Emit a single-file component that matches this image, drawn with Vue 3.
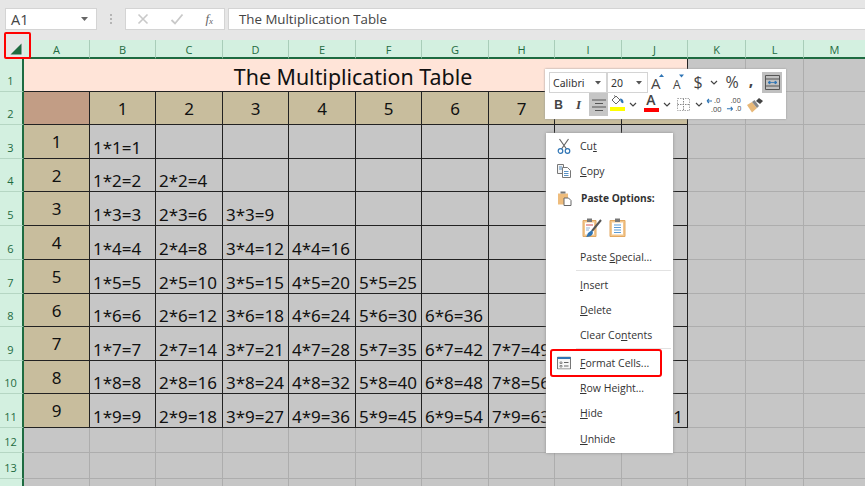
<script setup>
const colLetters = ['A','B','C','D','E','F','G','H','I','J','K','L','M']
const colWidths = [66,66,67,66,67,66,67,66,67,66,58,58,62]
const rowHeights = [33,33,34,33,34,34,34,33,34,33,34,25,26,26]
const gridStyle = {
  gridTemplateColumns: '24px ' + colWidths.map(w => w + 'px').join(' '),
  gridTemplateRows: '19px ' + rowHeights.map(h => h + 'px').join(' ')
}
const nums = [1,2,3,4,5,6,7,8,9]
const covered = j => j === 8
const headerNums = nums.map(n => (n < 8 ? n : ''))
const tableRows = nums.map(n => ({ n, cells: nums.map(j => (j <= n && !covered(j)) ? `${j}*${n}=${j*n}` : '') }))
</script>

<template>
  <div class="app">
    <div class="formula-bar">
      <div class="namebox">
        <span>A1</span>
        <svg width="8" height="5" viewBox="0 0 8 5"><path d="M0 0h7L3.5 4z" fill="#666"/></svg>
      </div>
      <div class="dots"><i></i><i></i><i></i></div>
      <div class="fx-buttons">
        <svg width="12" height="12" viewBox="0 0 12 12"><path d="M1.5 1.5l9 9M10.5 1.5l-9 9" stroke="#c9c9c9" stroke-width="1.6" fill="none"/></svg>
        <svg width="14" height="12" viewBox="0 0 14 12"><path d="M1.5 7l3.5 3.5L12.5 1.5" stroke="#c9c9c9" stroke-width="1.8" fill="none"/></svg>
        <span class="fx">f<sub>x</sub></span>
      </div>
      <div class="formula-input">The Multiplication Table</div>
    </div>

    <div class="sheet" :style="gridStyle">
      <div class="corner">
        <svg class="corner-tri" width="12" height="12" viewBox="0 0 12 12"><path d="M11.5 .5V11.5H.5z" fill="#1e6b41"/></svg>
      </div>
      <div v-for="c in colLetters" :key="c" class="col-head">{{ c }}</div>

      <div class="row-head">1</div>
      <div class="title-cell">The Multiplication Table</div>
      <div class="blank"></div><div class="blank"></div><div class="blank"></div>

      <div class="row-head">2</div>
      <div class="cell a2"></div>
      <div v-for="(n, k) in headerNums" :key="'h'+k" class="cell tan">{{ n }}</div>
      <div class="blank"></div><div class="blank"></div><div class="blank"></div>

      <template v-for="(r, i) in tableRows" :key="r.n">
        <div class="row-head">{{ i + 3 }}</div>
        <div class="cell tan">{{ r.n }}</div>
        <div v-for="(t, k) in r.cells" :key="k" class="cell product">{{ t }}</div>
        <div class="blank"></div><div class="blank"></div><div class="blank"></div>
      </template>

      <template v-for="rn in [12,13,14]" :key="rn">
        <div class="row-head">{{ rn < 14 ? rn : '' }}</div>
        <div v-for="c in colLetters" :key="c" class="blank"></div>
      </template>
    </div>

    <div class="corner-mark"></div>

    <div class="mini-bar">
      <div class="mini-row">
        <div class="combo font"><span>Calibri</span><svg width="6" height="4" viewBox="0 0 6 4"><path d="M0 0h6L3 3.5z" fill="#555"/></svg></div>
        <div class="combo size"><span>20</span><svg width="6" height="4" viewBox="0 0 6 4"><path d="M0 0h6L3 3.5z" fill="#555"/></svg></div>
        <div class="tool w20 first">
          <svg width="20" height="21" viewBox="0 0 20 21"><text x="2" y="16.500" font-size="15" font-family="Open Sans" fill="#444">A</text><path d="M10 5l2.500-3L15 5z" fill="#2f75b5"/></svg>
        </div>
        <div class="tool w20">
          <svg width="20" height="21" viewBox="0 0 20 21"><text x="4" y="16.500" font-size="12" font-family="Open Sans" fill="#444">A</text><path d="M10 2.500h5L12.500 5.500z" fill="#2f75b5"/></svg>
        </div>
        <div class="tool w18 glyph">$</div>
        <div class="tool w14"><svg width="8" height="5" viewBox="0 0 8 5"><path d="M1 1l3 3 3-3" stroke="#444" stroke-width="1.2" fill="none"/></svg></div>
        <div class="tool w22 glyph">%</div>
        <div class="tool w16 glyph comma">,</div>
        <div class="tool wrap">
          <svg width="17" height="17" viewBox="0 0 17 17"><path d="M1.500 1.500h14v14h-14zM1.500 5h14M1.500 12h14" stroke="#555" fill="none"/><path d="M4 8.500h9M4 8.500l2-1.500v3zM13 8.500l-2-1.500v3z" stroke="#2f75b5" fill="#2f75b5" stroke-width=".8"/></svg>
        </div>
      </div>
      <div class="mini-row">
        <div class="tool w19 b">B</div>
        <div class="tool w21 it">I</div>
        <div class="tool center">
          <svg width="14" height="12" viewBox="0 0 14 12"><path d="M0 1h14M3 4.500h8M0 8h14M3 11.500h8" stroke="#555" stroke-width="1.100"/></svg>
        </div>
        <div class="tool w18 stack">
          <svg width="16" height="12" viewBox="0 0 16 12"><path d="M3 6l4-4 4 4-4 4z" fill="#fff" stroke="#666"/><path d="M5 1.500L7 3" stroke="#666"/><path d="M11 4.500c2 0 3.500 1.500 3.500 4 0 1-3 1.500-3.500-4z" fill="#2f75b5"/></svg>
          <i class="swatch yellow"></i>
        </div>
        <div class="tool w14"><svg width="8" height="5" viewBox="0 0 8 5"><path d="M1 1l3 3 3-3" stroke="#444" stroke-width="1.2" fill="none"/></svg></div>
        <div class="tool w18 stack font-color gap">
          <span>A</span>
          <i class="swatch red"></i>
        </div>
        <div class="tool w14"><svg width="8" height="5" viewBox="0 0 8 5"><path d="M1 1l3 3 3-3" stroke="#444" stroke-width="1.2" fill="none"/></svg></div>
        <div class="tool w18">
          <svg width="13" height="13" viewBox="0 0 13 13"><path d="M.5 .5h12v12H.5z" stroke="#a8a8a8" fill="none" stroke-dasharray="1.500 1"/><path d="M6.500 .5v12M.5 6.500h12" stroke="#888" stroke-dasharray="1.500 1"/></svg>
        </div>
        <div class="tool w14"><svg width="8" height="5" viewBox="0 0 8 5"><path d="M1 1l3 3 3-3" stroke="#444" stroke-width="1.2" fill="none"/></svg></div>
        <div class="tool w20">
          <svg width="20" height="21" viewBox="0 0 20 21"><path d="M1 7h5M1 7l2-2M1 7l2 2" stroke="#2f75b5" fill="none" stroke-width="1.100"/><text x="8" y="9" font-size="7.500" font-family="Open Sans" fill="#444">.0</text><text x="5" y="17.500" font-size="7.500" font-family="Open Sans" fill="#444">.00</text></svg>
        </div>
        <div class="tool w19">
          <svg width="20" height="21" viewBox="0 0 20 21"><text x="5" y="9" font-size="7.500" font-family="Open Sans" fill="#444">.00</text><path d="M1 15h6M7 15l-2-2M7 15l-2 2" stroke="#2f75b5" fill="none" stroke-width="1.100"/><text x="10" y="17.500" font-size="7.500" font-family="Open Sans" fill="#444">.0</text></svg>
        </div>
        <div class="tool w20">
          <svg width="18" height="16" viewBox="0 0 18 16"><path d="M1 8l5 7.500 5-4.500L6 5z" fill="#e8b878"/><path d="M6 5l5 6 2-2-4.500-6z" fill="#888"/><path d="M10 4l3-3 4 3-3 3z" fill="#444"/></svg>
        </div>
      </div>
    </div>

    <div class="menu">
      <div class="item">
        <svg class="ic" width="14" height="16" viewBox="0 0 14 16"><path d="M2.500 1l7 10M11.500 1l-7 10" stroke="#666" stroke-width="1.200" fill="none"/><circle cx="3.500" cy="13" r="2.300" fill="none" stroke="#2f75b5" stroke-width="1.200"/><circle cx="10.500" cy="13" r="2.300" fill="none" stroke="#2f75b5" stroke-width="1.200"/></svg>
        <span>Cu<u>t</u></span>
      </div>
      <div class="item">
        <svg class="ic" width="14" height="14" viewBox="0 0 14 14"><path d="M.5 .5h6v9h-6z" fill="#f4f4f4" stroke="#777"/><path d="M5.500 3.500h5l3 3v7h-8z" fill="#fff" stroke="#777"/><path d="M7 7.500h4.500M7 9.500h4.500M7 11.500h4.500M2 3h3M2 5h3" stroke="#2f75b5" stroke-width=".8"/></svg>
        <span><u>C</u>opy</span>
      </div>
      <div class="item paste-head">
        <svg class="ic" width="15" height="16" viewBox="0 0 15 16"><path d="M1 3.500h10v11H1z" fill="#eebc7c"/><path d="M3.500 3.500V1.500h5v2z" fill="#777"/><path d="M7 8h4.500l2.500 2.500V15.500H7z" fill="#fff" stroke="#666"/></svg>
        <strong>Paste Options:</strong>
      </div>
      <div class="item paste-icons">
        <svg width="20" height="21" viewBox="0 0 20 21"><path d="M1 3.500h13v16H1z" fill="#f3c78e" stroke="#e3a962"/><path d="M3 5.500h9v12H3z" fill="#fff"/><path d="M5 1.500h5v3.500H5z" fill="#777"/><path d="M4 8h7" stroke="#e08a8a" stroke-width="1.500"/><path d="M4 11h4M4 13h3" stroke="#8fb4d8" stroke-width="1.200"/><path d="M19 3l-9 11" stroke="#555" stroke-width="2"/><path d="M10 13l-4 3c-1 2-1 3-2 4 3 0 6-1 7-4z" fill="#2f75b5"/></svg>
        <svg width="18" height="21" viewBox="0 0 18 21"><path d="M1 3.500h15v16H1z" fill="#f3c78e" stroke="#e3a962"/><path d="M3 5.500h11v12H3z" fill="#fff"/><path d="M6 1.500h5v3.500H6z" fill="#777"/><path d="M5 8h7M5 10.500h7M5 13h7M5 15.500h7" stroke="#5b9bd5" stroke-width="1.100"/></svg>
      </div>
      <div class="item"><span>Paste <u>S</u>pecial...</span></div>
      <div class="sep"></div>
      <div class="item"><span><u>I</u>nsert</span></div>
      <div class="item"><span><u>D</u>elete</span></div>
      <div class="item"><span>Clear Co<u>n</u>tents</span></div>
      <div class="sep tight"></div>
      <div class="item format">
        <svg class="ic" width="14" height="13" viewBox="0 0 14 13"><path d="M.5 .5h13v12H.5z" fill="#f6f6f6" stroke="#777"/><path d="M.5 1.500h13" stroke="#2f75b5" stroke-width="2"/><path d="M3 5.500h2v1.500H3zM3 9h2v1.500H3z" fill="#fff" stroke="#666" stroke-width=".7"/><path d="M7 6h4.500M7 9.500h4.500" stroke="#666"/></svg>
        <span><u>F</u>ormat Cells...</span>
        <div class="format-mark"></div>
      </div>
      <div class="item"><span><u>R</u>ow Height...</span></div>
      <div class="item"><span><u>H</u>ide</span></div>
      <div class="item"><span><u>U</u>nhide</span></div>
    </div>
  </div>
</template>

<style scoped>
.app {
  position: relative;
  width: 865px;
  height: 486px;
  overflow: hidden;
  background: #e6e6e6;
  font-family: "Open Sans", "Noto Sans", sans-serif;
}
.formula-bar {
  height: 40px;
  box-sizing: border-box;
  padding: 8px 0 10px 5px;
  display: flex;
  align-items: stretch;
  background: #e6e6e6;
}
.namebox {
  width: 92px;
  box-sizing: border-box;
  background: #fff;
  border: 1px solid #d4d4d4;
  display: flex;
  align-items: center;
  justify-content: space-between;
  padding: 0 7px 0 5px;
  font-size: 14.500px;
  color: #444;
}
.dots {
  width: 28px;
  display: flex;
  flex-direction: column;
  align-items: center;
  justify-content: center;
  gap: 2px;
}
.dots i { width: 2px; height: 2px; background: #b5b5b5; }
.fx-buttons {
  width: 100px;
  box-sizing: border-box;
  background: #fff;
  border: 1px solid #d4d4d4;
  display: flex;
  align-items: center;
  padding: 0 11px;
  justify-content: space-between;
}
.fx {
  font-family: "Liberation Serif", serif;
  font-style: italic;
  font-size: 13px;
  color: #666;
}
.fx sub { font-size: 9px; vertical-align: -1px; }
.formula-input {
  flex: 1;
  margin-left: 3px;
  background: #fff;
  border: 1px solid #d4d4d4;
  border-right: 0;
  display: flex;
  align-items: center;
  padding-left: 10px;
  font-size: 13.300px;
  color: #444;
}
.sheet {
  display: grid;
  width: 900px;
  background: #c6c6c6;
}
.corner {
  background: #e6e6e6;
  position: relative;
}
.corner-tri { position: absolute; right: 2px; bottom: 4px; }
.col-head {
  box-sizing: border-box;
  background: #d3f0e0;
  color: #1e6b41;
  border-right: 1px solid #a9cdb9;
  border-bottom: 2px solid #1e6b41;
  font-size: 11px;
  text-align: center;
  line-height: 20px;
}
.row-head {
  box-sizing: border-box;
  background: #d3f0e0;
  color: #1e6b41;
  border-right: 2px solid #1e6b41;
  border-bottom: 1px solid #b5d6c3;
  font-size: 11px;
  text-align: center;
  display: flex;
  align-items: flex-end;
  justify-content: center;
  padding-bottom: 3px;
  padding-right: 1px;
  line-height: 14px;
}
.title-cell {
  grid-column: span 10;
  box-sizing: border-box;
  background: #ffe4d8;
  border-bottom: 1px solid #222;
  border-right: 1px solid #222;
  padding-right: 5px;
  font-family: "Noto Sans", sans-serif;
  font-size: 21.400px;
  color: #111;
  text-align: center;
  line-height: 35px;
}
.blank {
  box-sizing: border-box;
  background: #c6c6c6;
  border-right: 1px solid #adadad;
  border-bottom: 1px solid #adadad;
}
.cell {
  box-sizing: border-box;
  border-right: 1px solid #222;
  border-bottom: 1px solid #222;
  font-family: "Noto Sans", sans-serif;
  font-size: 17px;
  color: #111;
  white-space: nowrap;
}
.a2 { background: #c29d85; }
.tan {
  background: #c8bd9d;
  display: flex;
  align-items: center;
  justify-content: center;
}
.product {
  background: #c6c6c6;
  display: flex;
  align-items: flex-end;
  padding-left: 3px;
  line-height: 21px;
}
.corner-mark {
  position: absolute;
  left: 4px;
  top: 32px;
  width: 27px;
  height: 27px;
  box-sizing: border-box;
  border: 2px solid #f00;
  border-radius: 2px;
}
.mini-bar {
  position: absolute;
  left: 545px;
  top: 69px;
  width: 241px;
  height: 50px;
  box-sizing: border-box;
  padding: 3px 0 0 4px;
  background: #fff;
  box-shadow: 0 0 2px #999;
}
.mini-row {
  display: flex;
  height: 21px;
  align-items: stretch;
}
.mini-row + .mini-row { height: 23px; }
.combo {
  box-sizing: border-box;
  height: 21px;
  border: 1px solid #d4d4d4;
  display: flex;
  align-items: center;
  justify-content: space-between;
  padding: 0 5px 0 3px;
  font-size: 10.500px;
  color: #333;
  font-family: "Noto Sans", sans-serif;
}
.font { width: 58px; }
.size { width: 41px; }
.tool {
  display: flex;
  align-items: center;
  justify-content: center;
  color: #444;
}
.first { margin-left: 1px; }
.w14 { width: 14px; }
.w16 { width: 16px; }
.w18 { width: 18px; }
.w19 { width: 19px; }
.w20 { width: 20px; }
.w21 { width: 21px; }
.w22 { width: 22px; }
.glyph { font-size: 16px; line-height: 21px; }
.comma { font-weight: 700; padding-bottom: 5px; margin-right: 3px; }
.wrap { width: 20px; background: #c0c0c0; }
.b { font-weight: 700; font-size: 12px; font-family: "Liberation Sans", sans-serif; }
.it { font-style: italic; font-weight: 700; font-size: 13px; font-family: "Liberation Serif", serif; }
.center { width: 19px; background: #c6c6c6; }
.stack {
  flex-direction: column;
  gap: 1px;
  padding-bottom: 4px;
}
.font-color span { font-size: 14px; line-height: 14px; font-weight: 600; }
.gap { margin-left: 2px; }
.swatch { display: block; width: 15px; height: 4px; flex: none; }
.yellow { background: #ff0; }
.red { background: #f00; }
.menu {
  position: absolute;
  left: 546px;
  top: 133px;
  width: 127px;
  height: 320px;
  box-sizing: border-box;
  background: #fff;
  box-shadow: 0 0 3px #8f8f8f;
  font-size: 10.500px;
  color: #333;
}
.item {
  position: relative;
  height: 25.300px;
  display: flex;
  align-items: center;
  padding-left: 34px;
  white-space: nowrap;
}
.paste-head { margin-top: 2px; }
.ic { position: absolute; left: 11px; top: 50%; transform: translateY(-50%); }
.item strong { font-weight: 700; margin-left: 1px; font-size: 10.200px; }
.paste-icons {
  height: 33px;
  gap: 7px;
  padding-left: 36px;
}
.sep {
  height: 1px;
  margin: 1px 2px 1px 30px;
  background: #e2e2e2;
}
.sep.tight { margin-top: 0; margin-bottom: 1px; }
.format-mark {
  position: absolute;
  left: 4px;
  top: -1px;
  width: 112px;
  height: 28px;
  box-sizing: border-box;
  border: 2.500px solid #f00;
  border-radius: 3px;
}
</style>
